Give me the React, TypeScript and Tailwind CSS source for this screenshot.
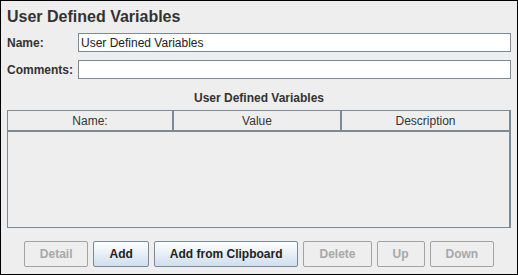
const font = { fontFamily: '"Liberation Sans", Arial, sans-serif' };

function Btn({ label, enabled }: { label: string; enabled?: boolean }) {
  return (
    <button
      className={
        enabled
          ? "h-[26px] rounded-[2px] border border-[#7a8a99] bg-gradient-to-b from-white to-[#cfdeed] px-[15px] text-[12px] font-bold text-[#222]"
          : "h-[26px] rounded-[2px] border border-[#a3a3a3] bg-[#eeeeee] px-[15px] text-[12px] font-bold text-[#a8a8a8]"
      }
    >
      {label}
    </button>
  );
}

export default function App() {
  return (
    <div
      style={font}
      className="flex h-[275px] w-[518px] flex-col border border-black bg-[#eeeeee] text-[#333]"
    >
      <div className="pl-[6px] pt-[7px] text-[16px] font-bold leading-[18px]">
        User Defined Variables
      </div>

      <div className="mt-[7px] flex items-center pl-[6px] pr-[6px]">
        <span className="w-[71px] text-[12px] font-bold">Name:</span>
        <div className="flex h-[19px] flex-1 items-center border border-[#7a8a99] bg-white pl-[2px] text-[12px] text-[#222]">
          User Defined Variables
        </div>
      </div>

      <div className="mt-[8px] flex items-center pl-[6px] pr-[6px]">
        <span className="w-[71px] text-[12px] font-bold">Comments:</span>
        <div className="h-[19px] flex-1 border border-[#7a8a99] bg-white" />
      </div>

      <div className="mt-[12px] text-center text-[12px] font-bold leading-[14px]">
        User Defined Variables
      </div>

      <div className="mx-[6px] mt-[5px] flex h-[118px] flex-col border border-[#7a8a99] border-r-2">
        <div className="grid h-[21px] grid-cols-[166px_168px_1fr] border-b-2 border-[#7a8a99] text-[12px]">
          <div className="flex items-center justify-center border-r-2 border-[#7a8a99]">Name:</div>
          <div className="flex items-center justify-center border-r-2 border-[#7a8a99]">Value</div>
          <div className="flex items-center justify-center">Description</div>
        </div>
        <div className="flex-1" />
      </div>

      <div className="mt-[13px] flex justify-center gap-[5px]">
        <Btn label="Detail" />
        <Btn label="Add" enabled />
        <Btn label="Add from Clipboard" enabled />
        <Btn label="Delete" />
        <Btn label="Up" />
        <Btn label="Down" />
      </div>
    </div>
  );
}
